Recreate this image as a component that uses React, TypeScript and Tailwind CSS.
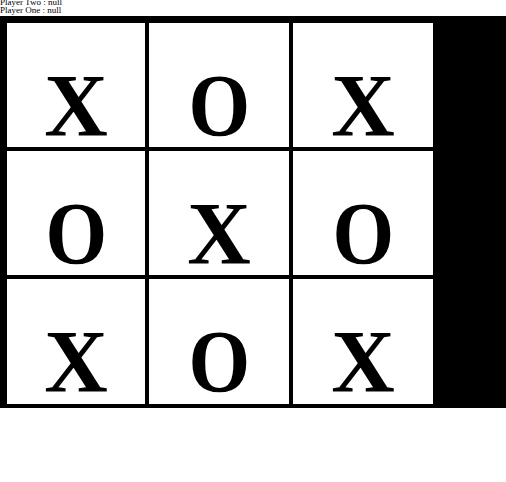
import React from "react";

const cells = ["X", "O", "X", "O", "X", "O", "X", "O", "X"];

export default function App() {
  return (
    <div className="w-[506px] h-[482px] bg-white" style={{ fontFamily: '"Liberation Serif", "Times New Roman", serif' }}>
      <div className="h-[16px] overflow-hidden text-[9px] leading-[8px] text-black">
        <div className="-mt-[2px]">Player Two : null</div>
        <div>Player One : null</div>
      </div>
      <div className="bg-black pt-[7px] pl-[7px] pb-[4px]">
        <div className="grid grid-cols-[138px_140px_140px] grid-rows-[124px_124px_125px] gap-[4px] w-[426px]">
          {cells.map((c, i) => (
            <div key={i} className="bg-white flex justify-center items-start pt-[39px]">
              <span
                className={
                  c === "O"
                    ? "inline-block text-[88px] leading-[88px] font-bold text-black scale-x-[0.9]"
                    : "inline-block text-[88px] leading-[88px] font-bold text-black"
                }
              >
                {c}
              </span>
            </div>
          ))}
        </div>
      </div>
    </div>
  );
}
